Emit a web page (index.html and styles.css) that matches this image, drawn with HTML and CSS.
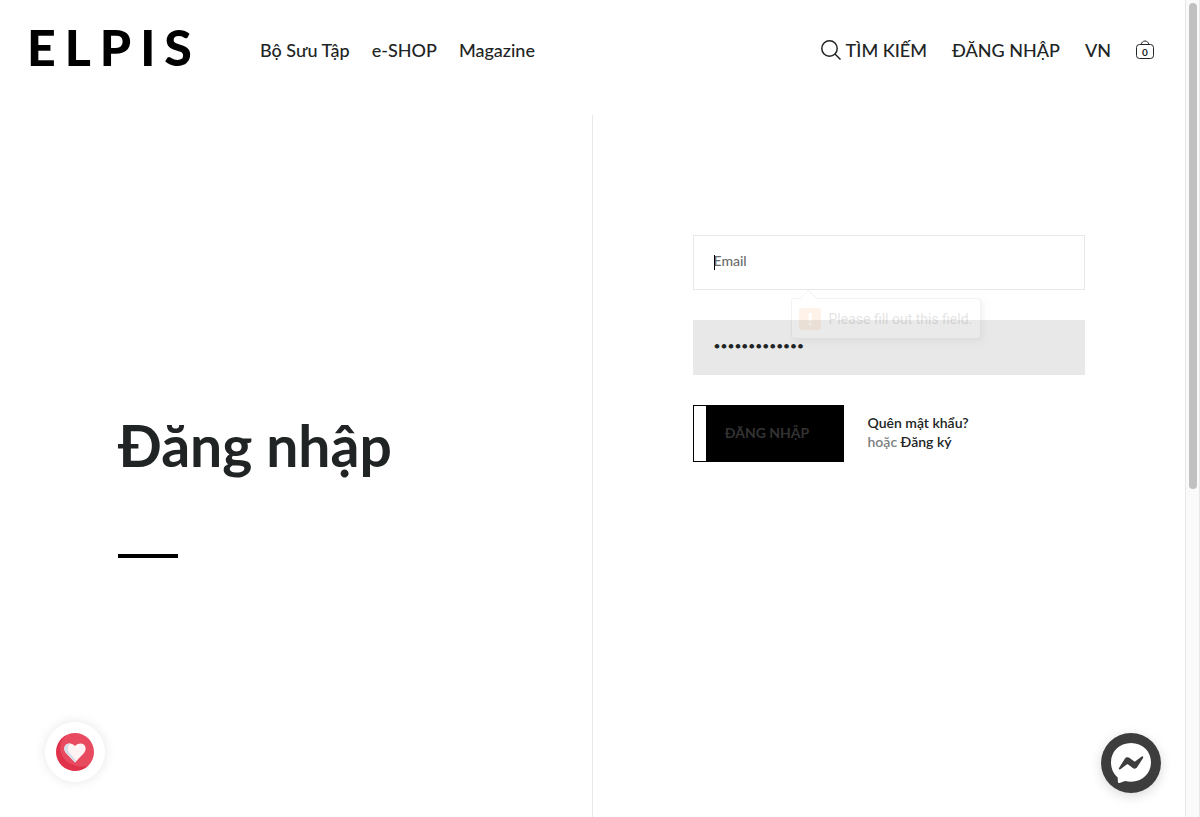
FILE: index.html
```html
<!DOCTYPE html>
<html lang="vi">
<head>
<meta charset="utf-8">
<meta name="viewport" content="width=device-width, initial-scale=1">
<title>ELPIS – Đăng nhập</title>
<link rel="stylesheet" href="styles.css">
</head>
<body>
<div class="page">
  <header class="header">
    <a class="logo" href="#" aria-label="ELPIS"><span>E</span><span>L</span><span>P</span><span>I</span><span>S</span></a>
    <nav class="nav">
      <a href="#">Bộ Sưu Tập</a>
      <a href="#">e-SHOP</a>
      <a href="#">Magazine</a>
    </nav>
    <nav class="tools">
      <a class="search" href="#">
        <svg width="20" height="20" viewBox="0 0 20 20" fill="none" stroke="#212424" stroke-width="1.5" aria-hidden="true"><circle cx="8.5" cy="8.5" r="7.7"/><path d="M14 14l5.5 5.5"/></svg>
        <span>TÌM KIẾM</span>
      </a>
      <a href="#">ĐĂNG NHẬP</a>
      <a href="#">VN</a>
      <a class="cart" href="#" aria-label="Giỏ hàng">
        <svg width="18" height="20" viewBox="0 0 18 20" fill="none" stroke="#212424" aria-hidden="true"><rect x=".5" y="4.5" width="17" height="14" rx="3"/><path d="M5 4.500C5.500 2.500 7 1 9 1s3.500 1.500 4 3.500"/></svg>
        <span class="cart-count">0</span>
      </a>
    </nav>
  </header>
  <main class="main">
    <section class="intro">
      <h1 class="title">Đăng nhập</h1>
      <div class="rule"></div>
    </section>
    <section class="account">
      <form class="form">
        <div class="field">
          <input class="input" type="email" placeholder="Email" aria-label="Email">
          <span class="caret"></span>
          <div class="tip" role="alert">
            <svg class="tip-arrow" width="18" height="9" viewBox="0 0 18 9" aria-hidden="true"><path d="M0 9L8 1h1L17 9" fill="#fff" stroke="#888"/></svg>
            <svg width="22" height="22" viewBox="0 0 22 22" aria-hidden="true"><rect width="22" height="22" rx="2" fill="#ff9632"/><path d="M9.500 5h3.500l-.5 8h-2.500z" fill="#fff"/><circle cx="11.250" cy="16" r="1.800" fill="#fff"/></svg>
            <span>Please fill out this field.</span>
          </div>
        </div>
        <div class="field">
          <input class="input filled" type="password" value="elpispassword" aria-label="Mật khẩu">
        </div>
        <div class="actions">
          <button class="submit" type="button">ĐĂNG NHẬP</button>
          <p class="links"><a href="#">Quên mật khẩu?</a><br>hoặc <a href="#">Đăng ký</a></p>
        </div>
      </form>
    </section>
  </main>
  <button class="wish" type="button" aria-label="Yêu thích">
    <svg width="38" height="38" viewBox="0 0 38 38" aria-hidden="true"><circle cx="19" cy="19" r="19" fill="#e84a5f"/><path d="M12 1.300A19 19 0 1 0 32 33C16 36 3 26 4.500 13 5 8 8 4 12 1.300z" fill="#e0334b"/><path d="M19 29.500L10 20c-5-6 2-13.500 9-7 7-6.500 14 1 9 7z" fill="#fff3f3"/><path d="M19 29.500L10 20c-4-5-.5-10.500 5-9.500-4 2-4 6.500-1 10l6.500 7.500z" fill="#d5dee8"/></svg>
  </button>
  <button class="chat" type="button" aria-label="Messenger">
    <svg width="60" height="60" viewBox="0 0 60 60" aria-hidden="true"><circle cx="30" cy="30" r="30" fill="#3d3d3d"/><path d="M30 10c11.500 0 20 8.300 20 19.300s-8.500 19.400-20 19.400c-2 0-4-.3-5.800-.8l-5.700 2c-.9.300-1.500-.1-1.600-1l-.2-4.300C12.500 41 10 35.500 10 29.300 10 18.300 18.500 10 30 10z" fill="#fff"/><path d="M18 35l6-9.400c.9-1.500 2.900-1.800 4.300-.8l4.700 3.500c.4.300 1 .3 1.400 0l6.300-4.800c.9-.7 2 .4 1.400 1.400l-6 9.300c-.9 1.500-2.900 1.900-4.300.8l-4.700-3.500c-.4-.3-1-.3-1.400 0l-6.300 4.800c-.9.700-2-.3-1.400-1.300z" fill="#3d3d3d"/></svg>
  </button>
</div>
<div class="scrollbar" aria-hidden="true"><div class="thumb"></div></div>
</body>
</html>
```
FILE: styles.css
```css
* { box-sizing: border-box; }

body {
  margin: 0;
  min-height: 100vh;
  display: flex;
  background: #fff;
  color: #212424;
  font-family: Lato, "Open Sans", sans-serif;
  font-weight: 500;
}

a { color: inherit; text-decoration: none; }
button { font: inherit; border: 0; padding: 0; cursor: pointer; }

.page { flex: 1; display: flex; flex-direction: column; }

.header {
  display: flex;
  align-items: center;
  padding: 17px 31px 38px 27px;
  font-size: 18px;
  line-height: 24px;
}
.logo {
  display: flex;
  gap: 9px;
  width: 233px;
  color: #000;
  font-size: 50px;
  font-weight: 900;
  line-height: 60px;
}
.nav { display: flex; gap: 22px; padding-top: 6px; }
.tools { display: flex; align-items: center; gap: 25px; margin-left: auto; padding-top: 6px; }
.search { display: flex; align-items: center; gap: 5px; }
.cart { position: relative; display: flex; }
.cart-count {
  position: absolute;
  inset: 6px 0 0;
  text-align: center;
  font-size: 10px;
  line-height: 12px;
  font-weight: 700;
}

.main { flex: 1; display: grid; grid-template-columns: 1fr 1fr; }
.intro {
  display: flex;
  flex-direction: column;
  justify-content: center;
  padding: 31px 0 0 118px;
  border-right: 1px solid #e8e8e8;
}
.title { margin: 0; font-size: 57px; line-height: 80px; font-weight: 700; }
.rule { width: 60px; height: 4px; margin-top: 69px; background: #000; }

.account { padding: 120px 100px 0; }
.form { display: flex; flex-direction: column; gap: 30px; }
.field { position: relative; }
.input {
  display: block;
  width: 100%;
  height: 55px;
  padding: 0 20px 4px;
  border: 1px solid #e8e8e8;
  border-radius: 0;
  outline: 0;
  background: #fff;
  color: #212424;
  font: 500 14px Lato, sans-serif;
}
.input::placeholder { color: #6b6b6b; opacity: 1; }
.filled { background: #e8e8e8; font-size: 12px; }
.caret { position: absolute; left: 21px; top: 20px; width: 1px; height: 15px; background: #000; }
.tip {
  position: absolute;
  z-index: 1;
  left: 98px;
  top: 63px;
  display: flex;
  align-items: center;
  gap: 8px;
  height: 41px;
  padding: 0 8px 0 7px;
  border: 1px solid #888;
  border-radius: 3px;
  background: #fff;
  box-shadow: 3px 3px 5px #999;
  color: #000;
  font: 400 14px Roboto, sans-serif;
  white-space: nowrap;
  opacity: 0.1;
}
.tip-arrow { position: absolute; left: 8px; top: -9px; }

.actions { display: flex; gap: 24px; }
.submit {
  width: 151px;
  height: 57px;
  padding: 0 14px 2px 12px;
  border: 1px solid #000;
  background: linear-gradient(90deg, #fff 12px, #000 12px);
  color: #333;
  font-size: 14px;
  font-weight: 700;
}
.links { margin: 0; padding-top: 8px; font-size: 14px; line-height: 19px; font-weight: 600; color: #7d8080; }
.links a { color: #212424; }

.wish {
  position: fixed;
  left: 45px;
  bottom: 35px;
  width: 60px;
  height: 60px;
  display: grid;
  place-items: center;
  border-radius: 50%;
  background: #fff;
  box-shadow: 0 0 12px rgba(0, 0, 0, 0.1);
}
.chat {
  position: fixed;
  right: 39px;
  bottom: 24px;
  width: 60px;
  height: 60px;
  border-radius: 50%;
  background: none;
  box-shadow: 0 3px 12px rgba(0, 0, 0, 0.15);
}
.chat svg { display: block; }

.scrollbar {
  width: 15px;
  padding: 3px 2px 0 3px;
  border: solid #e8e8e8;
  border-width: 0 1px;
  background: #fafafa;
}
.thumb { width: 8px; height: 486px; border-radius: 4px; background: #c1c1c1; }
```
